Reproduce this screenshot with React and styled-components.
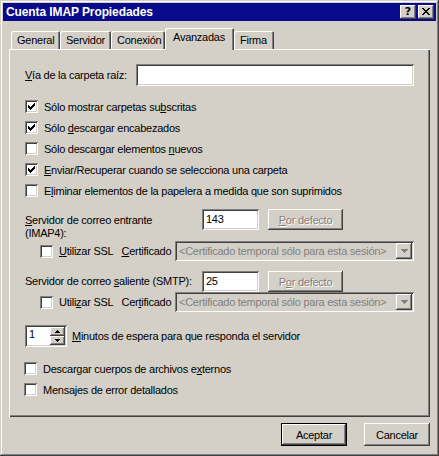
import React from 'react'
import styled, { createGlobalStyle, css } from 'styled-components'

const GlobalStyle = createGlobalStyle`
  html, body {
    margin: 0;
    padding: 0;
    background: #d4d0c8;
  }
  body {
    font-family: "Liberation Sans", Arial, sans-serif;
    font-size: 11px;
    letter-spacing: -0.25px;
    color: #000;
  }
`

const raised = css`
  box-shadow: inset -1px -1px #404040, inset 1px 1px #fff, inset -2px -2px #808080, inset 2px 2px #d4d0c8;
`

const sunken = css`
  box-shadow: inset 1px 1px #808080, inset -1px -1px #fff, inset 2px 2px #404040, inset -2px -2px #d4d0c8;
`

const K = styled.u`
  text-decoration: underline;
  text-underline-offset: 1px;
`

const Check = ({ checked }) => (
  <CheckBox>
    {checked && (
      <svg width="7" height="7" viewBox="0 0 7 7" shapeRendering="crispEdges">
        <path d="M0 2h1v3h-1zM1 3h1v3h-1zM2 4h1v3h-1zM3 3h1v3h-1zM4 2h1v3h-1zM5 1h1v3h-1zM6 0h1v3h-1z" fill="#000" />
      </svg>
    )}
  </CheckBox>
)

const CheckRow = ({ checked, children, shift }) => (
  <Row $shift={shift}>
    <Check checked={checked} />
    <CheckLabel>{children}</CheckLabel>
  </Row>
)

const DownArrow = ({ color = '#000' }) => (
  <svg width="7" height="4" viewBox="0 0 7 4" shapeRendering="crispEdges">
    <path d="M0 0h7v1h-7zM1 1h5v1h-5zM2 2h3v1h-3zM3 3h1v1h-1z" fill={color} />
  </svg>
)

const SmallDown = () => (
  <svg width="5" height="3" viewBox="0 0 5 3" shapeRendering="crispEdges">
    <path d="M0 0h5v1h-5zM1 1h3v1h-3zM2 2h1v1h-1z" fill="#000" />
  </svg>
)

const SmallUp = () => (
  <svg width="5" height="3" viewBox="0 0 5 3" shapeRendering="crispEdges">
    <path d="M2 0h1v1h-1zM1 1h3v1h-3zM0 2h5v1h-5z" fill="#000" />
  </svg>
)

const SslRow = ({ u, c }) => (
  <SslLine>
    <Check />
    <CheckLabel>{u}</CheckLabel>
    <CertLabel>{c}</CertLabel>
    <Combo>
      <ComboText>&lt;Certificado temporal sólo para esta sesión&gt;</ComboText>
      <ComboButton>
        <DownArrow color="#808080" />
      </ComboButton>
    </Combo>
  </SslLine>
)

const App = () => (
  <>
    <GlobalStyle />
    <Window>
      <TitleBar>
        <Title>Cuenta IMAP Propiedades</Title>
        <CaptionButtons>
          <CaptionButton>?</CaptionButton>
          <CaptionButton>
            <svg width="8" height="7" viewBox="0 0 8 7" shapeRendering="crispEdges">
              <path d="M0 0h2v1h-2zM6 0h2v1h-2zM1 1h2v1h-2zM5 1h2v1h-2zM2 2h4v1h-4zM3 3h2v1h-2zM2 4h4v1h-4zM1 5h2v1h-2zM5 5h2v1h-2zM0 6h2v1h-2zM6 6h2v1h-2z" fill="#000" />
            </svg>
          </CaptionButton>
        </CaptionButtons>
      </TitleBar>

      <Body>
        <Tabs>
          <Tab $width={49}>General</Tab>
          <Tab $width={51}>Servidor</Tab>
          <Tab $width={54}>Conexión</Tab>
          <Tab $width={69} $active>Avanzadas</Tab>
          <Tab $width={40}>Firma</Tab>
        </Tabs>

        <Panel>
          <PathRow>
            <PathLabel><K>V</K>ía de la carpeta raíz:</PathLabel>
            <TextInput $width={278} />
          </PathRow>

          <CheckGroup>
            <CheckRow checked>Sólo mostrar carpetas su<K>b</K>scritas</CheckRow>
            <CheckRow checked>Sólo <K>d</K>escargar encabezados</CheckRow>
            <CheckRow>Sólo descargar elementos <K>n</K>uevos</CheckRow>
            <CheckRow checked><K>E</K>nviar/Recuperar cuando se selecciona una carpeta</CheckRow>
            <CheckRow>E<K>l</K>iminar elementos de la papelera a medida que son suprimidos</CheckRow>
          </CheckGroup>

          <ServerRow $height={32} $top={8}>
            <ServerLabel $wrap><K>S</K>ervidor de correo entrante (IMAP4):</ServerLabel>
            <TextInput $width={57} $height={21}>143</TextInput>
            <DisabledButton><K>P</K>or defecto</DisabledButton>
          </ServerRow>
          <SslRow u={<><K>U</K>tilizar SSL</>} c={<><K>C</K>ertificado</>} />

          <ServerRow $height={21} $top={10}>
            <ServerLabel $center>Servidor de correo <K>s</K>aliente (SMTP):</ServerLabel>
            <TextInput $width={57} $height={21}>25</TextInput>
            <DisabledButton>P<K>o</K>r defecto</DisabledButton>
          </ServerRow>
          <SslRow u={<>Utili<K>z</K>ar SSL</>} c={<>Cer<K>t</K>ificado</>} />

          <SpinRow>
            <Spinner>
              <SpinValue>1</SpinValue>
              <SpinButtons>
                <SpinButton><SmallUp /></SpinButton>
                <SpinButton><SmallDown /></SpinButton>
              </SpinButtons>
            </Spinner>
            <span><K>M</K>inutos de espera para que responda el servidor</span>
          </SpinRow>

          <LowerGroup>
            <CheckRow shift>Descargar cuerpos de archivos e<K>x</K>ternos</CheckRow>
            <CheckRow shift>Mensajes de error detallados</CheckRow>
          </LowerGroup>
        </Panel>

        <Footer>
          <PushButton $default>Aceptar</PushButton>
          <PushButton>Cancelar</PushButton>
        </Footer>
      </Body>
    </Window>
  </>
)

const Window = styled.div`
  width: 439px;
  height: 456px;
  box-sizing: border-box;
  padding: 3px;
  display: flex;
  flex-direction: column;
  background: #d4d0c8;
  box-shadow: inset -1px -1px #404040, inset 1px 1px #d4d0c8, inset -2px -2px #808080, inset 2px 2px #fff;
`

const TitleBar = styled.div`
  height: 18px;
  background: #0a0a8c;
  display: flex;
  align-items: center;
  justify-content: space-between;
  padding: 0 2px 0 3px;
`

const Title = styled.div`
  color: #fff;
  font-family: "Liberation Sans", Arial, sans-serif;
  font-weight: bold;
  font-size: 12px;
  letter-spacing: -0.1px;
`

const CaptionButtons = styled.div`
  display: flex;
  gap: 2px;
`

const CaptionButton = styled.div`
  ${raised}
  width: 16px;
  height: 14px;
  background: #d4d0c8;
  display: flex;
  align-items: center;
  justify-content: center;
  font-family: "DejaVu Sans", sans-serif;
  font-weight: bold;
  font-size: 11px;
  letter-spacing: 0;
  line-height: 1;
  padding-bottom: 1px;
  box-sizing: border-box;
`

const Body = styled.div`
  flex: 1;
  display: flex;
  flex-direction: column;
  padding: 7px 6px 0 6px;
`

const Tabs = styled.div`
  display: flex;
  align-items: flex-end;
  height: 21px;
  padding-left: 2px;
  position: relative;
  z-index: 1;
`

const Tab = styled.div`
  width: ${({ $width }) => $width}px;
  height: 18px;
  box-sizing: border-box;
  padding: 3px 0 0 6px;
  border-radius: 2px 2px 0 0;
  background: #d4d0c8;
  box-shadow: inset 1px 1px #fff, inset -1px 0 #404040, inset -2px 0 #808080;
  white-space: nowrap;

  ${({ $active }) => $active && css`
    height: 22px;
    margin-bottom: -1px;
    padding: 3px 0 0 8px;
    position: relative;
  `}
`

const Panel = styled.div`
  height: 368px;
  box-sizing: border-box;
  display: flex;
  flex-direction: column;
  padding: 0 16px 0 16px;
  box-shadow: inset 1px 1px #fff, inset -1px -1px #404040, inset -2px -2px #808080;
`

const PathRow = styled.div`
  margin-top: 15px;
  height: 22px;
  display: flex;
  align-items: center;
  justify-content: space-between;
`

const PathLabel = styled.span`
  white-space: nowrap;
`

const TextInput = styled.div`
  ${sunken}
  width: ${({ $width }) => $width}px;
  height: ${({ $height }) => $height || 22}px;
  box-sizing: border-box;
  background: #fff;
  padding: 3px 4px;
  line-height: 14px;
  flex-shrink: 0;
`

const CheckGroup = styled.div`
  margin-top: 10px;
  display: flex;
  flex-direction: column;
`

const LowerGroup = styled(CheckGroup)`
  margin-top: 11px;
`

const Row = styled.div`
  height: 21px;
  display: flex;
  align-items: center;
  margin-left: ${({ $shift }) => ($shift ? -1 : 0)}px;
`

const CheckBox = styled.div`
  ${sunken}
  width: 13px;
  height: 13px;
  box-sizing: border-box;
  background: #fff;
  display: flex;
  align-items: center;
  justify-content: center;
  flex-shrink: 0;
`

const CheckLabel = styled.span`
  margin-left: 6px;
  white-space: nowrap;
`

const ServerRow = styled.div`
  display: flex;
  align-items: flex-start;
  height: ${({ $height }) => $height}px;
  margin-top: ${({ $top }) => $top}px;
`

const ServerLabel = styled.div`
  width: 177px;
  flex-shrink: 0;
  white-space: nowrap;
  ${({ $wrap }) => $wrap && css`
    white-space: normal;
    width: 150px;
    margin-right: 27px;
    line-height: 13px;
    margin-top: 5px;
  `}
  ${({ $center }) => $center && css`
    line-height: 21px;
  `}
`

const DisabledButton = styled.div`
  ${raised}
  width: 75px;
  height: 21px;
  margin-left: 9px;
  box-sizing: border-box;
  display: flex;
  align-items: center;
  justify-content: center;
  color: #808080;
  text-shadow: 1px 1px #fff;
`

const SslLine = styled.div`
  display: flex;
  align-items: center;
  height: 20px;
  padding-left: 15px;
`

const CertLabel = styled.span`
  margin-left: 8px;
  white-space: nowrap;
`

const Combo = styled.div`
  ${sunken}
  margin-left: auto;
  width: 239px;
  height: 20px;
  box-sizing: border-box;
  background: #d4d0c8;
  display: flex;
  align-items: center;
  padding: 2px;
  color: #808080;
`

const ComboText = styled.span`
  flex: 1;
  padding-left: 2px;
  white-space: nowrap;
  overflow: hidden;
`

const ComboButton = styled.div`
  ${raised}
  width: 16px;
  height: 16px;
  display: flex;
  align-items: center;
  justify-content: center;
`

const SpinRow = styled.div`
  margin-top: 13px;
  height: 22px;
  display: flex;
  align-items: center;
  gap: 5px;
`

const Spinner = styled.div`
  ${sunken}
  width: 42px;
  height: 22px;
  box-sizing: border-box;
  background: #fff;
  display: flex;
  padding: 2px;
`

const SpinValue = styled.span`
  flex: 1;
  padding: 1px 0 0 2px;
`

const SpinButtons = styled.div`
  display: flex;
  flex-direction: column;
  width: 15px;
`

const SpinButton = styled.div`
  ${raised}
  flex: 1;
  background: #d4d0c8;
  display: flex;
  align-items: center;
  justify-content: center;
`

const Footer = styled.div`
  display: flex;
  justify-content: flex-end;
  gap: 17px;
  margin-top: 6px;
`

const PushButton = styled.div`
  ${raised}
  width: 66px;
  height: 23px;
  box-sizing: border-box;
  display: flex;
  align-items: center;
  justify-content: center;

  ${({ $default }) => $default && css`
    box-shadow: inset 0 0 0 1px #000, inset -2px -2px #404040, inset 2px 2px #fff, inset -3px -3px #808080;
  `}
`

export default App
